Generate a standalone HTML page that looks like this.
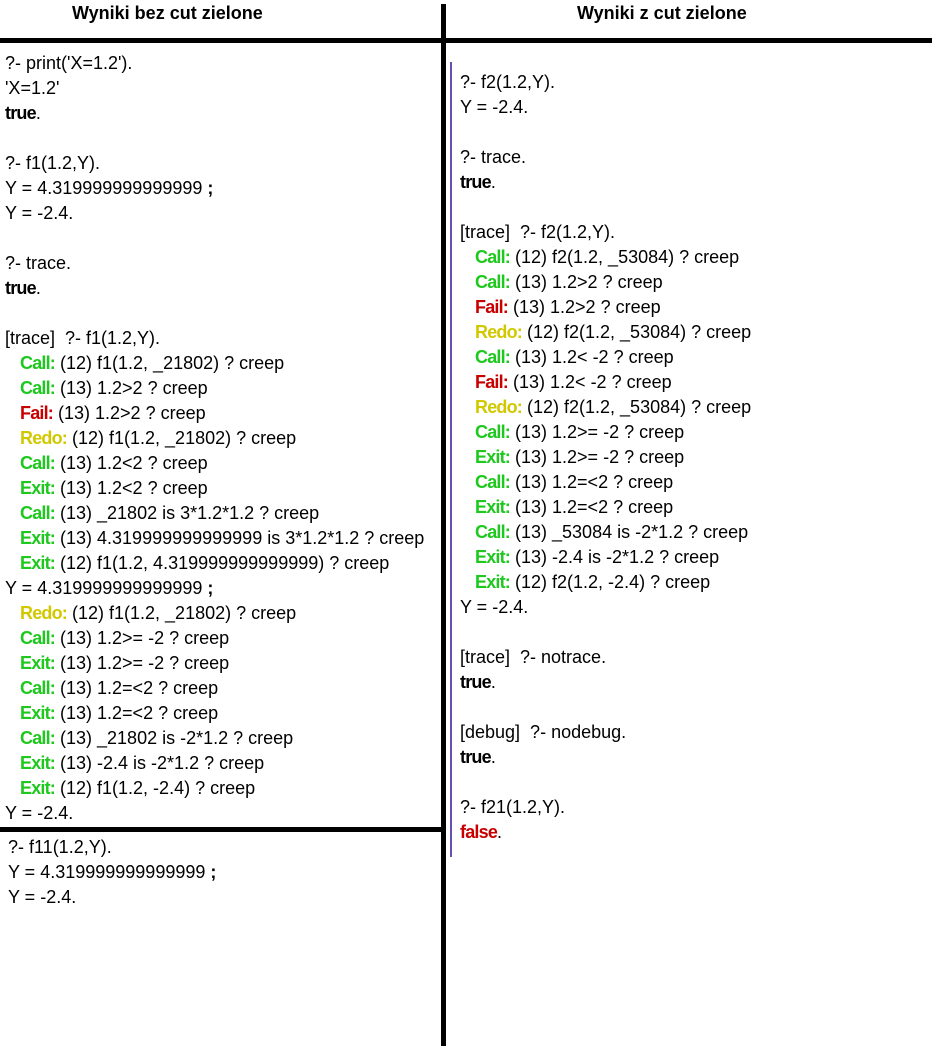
<!DOCTYPE html>
<html><head><meta charset="utf-8"><style>
body{margin:0;width:932px;height:1046px;background:#fff;position:relative;overflow:hidden;font-family:"Liberation Sans",Arial,sans-serif;}
.b{position:absolute;background:#000;}
.h{position:absolute;top:3px;font-weight:bold;font-size:18px;color:#000;}
.t{position:absolute;font-size:18px;line-height:25px;color:#000;white-space:pre;letter-spacing:0px;}
.i{padding-left:15px;}
.g{color:#1ec81e;font-weight:bold;letter-spacing:-0.8px}
.r{color:#c80000;font-weight:bold;letter-spacing:-0.8px}
.y{color:#d2c800;font-weight:bold;letter-spacing:-0.8px}
.k{font-weight:bold;letter-spacing:-0.8px}
</style></head><body>
<div class="h" style="left:72px">Wyniki bez cut zielone</div>
<div class="h" style="left:577px">Wyniki z cut zielone</div>
<div class="b" style="left:0;top:38px;width:932px;height:5px"></div>
<div class="b" style="left:441px;top:4px;width:5px;height:1042px"></div>
<div class="b" style="left:0;top:827px;width:443px;height:5px"></div>
<div style="position:absolute;left:450px;top:62px;width:2px;height:795px;background:#6a4fb0"></div>

<div class="t" style="left:5px;top:51px">?- print('X=1.2').
'X=1.2'
<span class="k">true</span>.

?- f1(1.2,Y).
Y = 4.319999999999999 <b>;</b>
Y = -2.4.

?- trace.
<span class="k">true</span>.

[trace]  ?- f1(1.2,Y).
<span class="i"><span class="g">Call:</span> (12) f1(1.2, _21802) ? creep</span>
<span class="i"><span class="g">Call:</span> (13) 1.2&gt;2 ? creep</span>
<span class="i"><span class="r">Fail:</span> (13) 1.2&gt;2 ? creep</span>
<span class="i"><span class="y">Redo:</span> (12) f1(1.2, _21802) ? creep</span>
<span class="i"><span class="g">Call:</span> (13) 1.2&lt;2 ? creep</span>
<span class="i"><span class="g">Exit:</span> (13) 1.2&lt;2 ? creep</span>
<span class="i"><span class="g">Call:</span> (13) _21802 is 3*1.2*1.2 ? creep</span>
<span class="i"><span class="g">Exit:</span> (13) 4.319999999999999 is 3*1.2*1.2 ? creep</span>
<span class="i"><span class="g">Exit:</span> (12) f1(1.2, 4.319999999999999) ? creep</span>
Y = 4.319999999999999 <b>;</b>
<span class="i"><span class="y">Redo:</span> (12) f1(1.2, _21802) ? creep</span>
<span class="i"><span class="g">Call:</span> (13) 1.2&gt;= -2 ? creep</span>
<span class="i"><span class="g">Exit:</span> (13) 1.2&gt;= -2 ? creep</span>
<span class="i"><span class="g">Call:</span> (13) 1.2=&lt;2 ? creep</span>
<span class="i"><span class="g">Exit:</span> (13) 1.2=&lt;2 ? creep</span>
<span class="i"><span class="g">Call:</span> (13) _21802 is -2*1.2 ? creep</span>
<span class="i"><span class="g">Exit:</span> (13) -2.4 is -2*1.2 ? creep</span>
<span class="i"><span class="g">Exit:</span> (12) f1(1.2, -2.4) ? creep</span>
Y = -2.4.</div>

<div class="t" style="left:8px;top:835px">?- f11(1.2,Y).
Y = 4.319999999999999 <b>;</b>
Y = -2.4.</div>

<div class="t" style="left:460px;top:70px">?- f2(1.2,Y).
Y = -2.4.

?- trace.
<span class="k">true</span>.

[trace]  ?- f2(1.2,Y).
<span class="i"><span class="g">Call:</span> (12) f2(1.2, _53084) ? creep</span>
<span class="i"><span class="g">Call:</span> (13) 1.2&gt;2 ? creep</span>
<span class="i"><span class="r">Fail:</span> (13) 1.2&gt;2 ? creep</span>
<span class="i"><span class="y">Redo:</span> (12) f2(1.2, _53084) ? creep</span>
<span class="i"><span class="g">Call:</span> (13) 1.2&lt; -2 ? creep</span>
<span class="i"><span class="r">Fail:</span> (13) 1.2&lt; -2 ? creep</span>
<span class="i"><span class="y">Redo:</span> (12) f2(1.2, _53084) ? creep</span>
<span class="i"><span class="g">Call:</span> (13) 1.2&gt;= -2 ? creep</span>
<span class="i"><span class="g">Exit:</span> (13) 1.2&gt;= -2 ? creep</span>
<span class="i"><span class="g">Call:</span> (13) 1.2=&lt;2 ? creep</span>
<span class="i"><span class="g">Exit:</span> (13) 1.2=&lt;2 ? creep</span>
<span class="i"><span class="g">Call:</span> (13) _53084 is -2*1.2 ? creep</span>
<span class="i"><span class="g">Exit:</span> (13) -2.4 is -2*1.2 ? creep</span>
<span class="i"><span class="g">Exit:</span> (12) f2(1.2, -2.4) ? creep</span>
Y = -2.4.

[trace]  ?- notrace.
<span class="k">true</span>.

[debug]  ?- nodebug.
<span class="k">true</span>.

?- f21(1.2,Y).
<span class="r">false</span>.</div>
</body></html>
